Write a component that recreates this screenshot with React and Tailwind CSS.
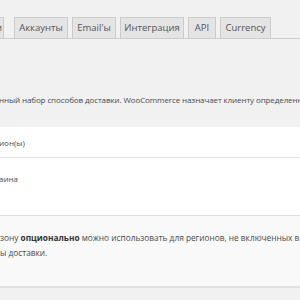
import React from 'react';

// WooCommerce settings → shipping zones, cropped to a 300px window.

const tabs = [
  { label: 'и', cls: 'w-[44px] -ml-[40px] justify-end pr-[1px]' },
  { label: 'Аккаунты', cls: 'w-[54px] ml-[10px]' },
  { label: "Email'ы", cls: 'w-[44px] ml-[4px]' },
  { label: 'Интеграция', cls: 'w-[64px] ml-[4px]' },
  { label: 'API', cls: 'w-[28px] ml-[4px]' },
  { label: 'Currency', cls: 'w-[51px] ml-[4px]' },
];

function Tabs() {
  return (
    <div className="flex items-end pt-[16px] border-b border-[#cccccc] h-[39px]">
      {tabs.map((t) => (
        <div
          key={t.label}
          className={`${t.cls} shrink-0 h-[22px] -mb-px flex items-center justify-center bg-[#e4e4e4] border border-[#cccccc] text-[9.5px] font-medium text-[#555555] whitespace-nowrap`}
        >
          {t.label}
        </div>
      ))}
    </div>
  );
}

export default function App() {
  return (
    <div
      className="w-[300px] h-[300px] overflow-hidden bg-[#f1f1f1] text-[#4a4a4a]"
      style={{ fontFamily: '"Open Sans", "Noto Sans", sans-serif' }}
    >
      <Tabs />

      {/* Intro paragraph */}
      <p className="mt-[55px] -ml-[1px] h-[33px] text-[8px] tracking-[-0.1px] leading-[12px] whitespace-nowrap">
        нный набор способов доставки. WooCommerce назначает клиенту определенную зону
      </p>

      {/* Zones table */}
      <div className="bg-white shadow-[0_1px_1px_rgba(0,0,0,0.06)]">
        <div className="h-[31px] flex items-center border-b border-[#e1e1e1] text-[8px] -ml-[1px] pt-[1px]">
          ион(ы)
        </div>
        <div className="h-[57px] pt-[14px] text-[8px] leading-[14px] -ml-[1px]">аина</div>
        <div className="h-[72px] bg-[#f9f9f9] border-t border-[#e1e1e1] border-b border-[#dcdcdc] pt-[14px] text-[8.3px] leading-[15px] whitespace-nowrap">
          <div>
            зону <b className="font-bold text-[#333333]">опционально</b> можно использовать для регионов, не включенных в другие
          </div>
          <div>ы доставки.</div>
        </div>
      </div>
    </div>
  );
}
